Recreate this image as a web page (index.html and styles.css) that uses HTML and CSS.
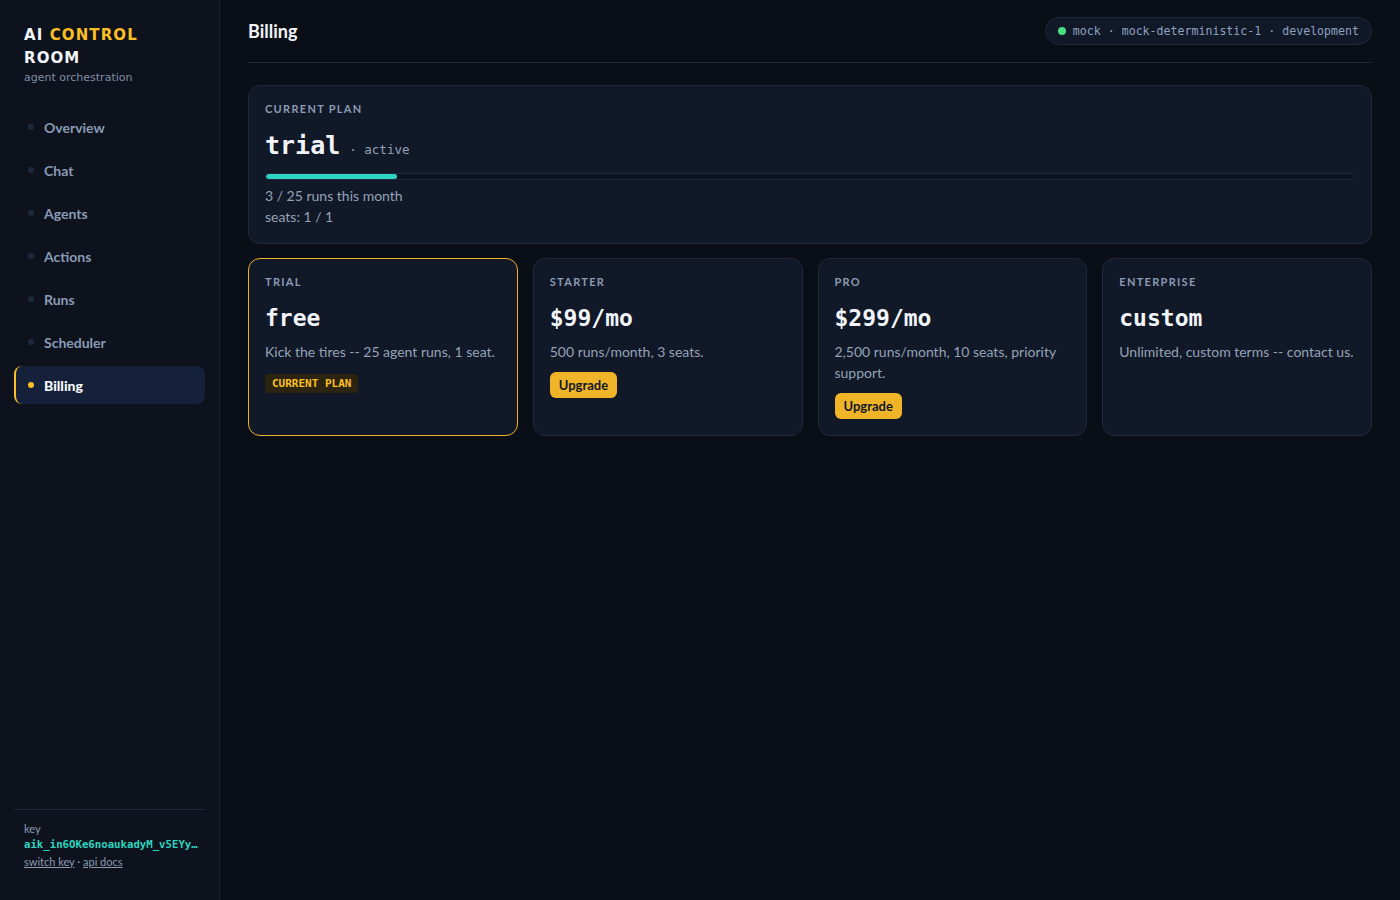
FILE: index.html
```html
<!DOCTYPE html>
<html lang="en">
<head>
  <meta charset="UTF-8" />
  <meta name="viewport" content="width=device-width, initial-scale=1.0"/>
  <title>Billing - AI Control Room</title>
  <link rel="stylesheet" href="styles.css">
</head>
<body>
  <aside class="sidebar">
    <div class="brand">
      <div class="brand-name">AI <span class="accent">CONTROL</span> ROOM</div>
      <div class="brand-sub">agent orchestration</div>
    </div>

    <nav class="nav">
      <a class="nav-item" href="#"><span class="dot"></span>Overview</a>
      <a class="nav-item" href="#"><span class="dot"></span>Chat</a>
      <a class="nav-item" href="#"><span class="dot"></span>Agents</a>
      <a class="nav-item" href="#"><span class="dot"></span>Actions</a>
      <a class="nav-item" href="#"><span class="dot"></span>Runs</a>
      <a class="nav-item" href="#"><span class="dot"></span>Scheduler</a>
      <a class="nav-item active" href="#"><span class="dot"></span>Billing</a>
    </nav>

    <div class="side-footer">
      <div class="key-label">key</div>
      <div class="key-value">aik_in6OKe6noaukadyM_v5EYy…</div>
      <div class="key-links"><a href="#">switch key</a> · <a href="#">api docs</a></div>
    </div>
  </aside>

  <main class="main">
    <header class="topbar">
      <h1>Billing</h1>
      <div class="status-pill">
        <span class="status-dot"></span>
        mock · mock-deterministic-1 · development
      </div>
    </header>

    <section class="card current">
      <div class="label">CURRENT PLAN</div>
      <div class="plan-line">
        <span class="plan-name">trial</span>
        <span class="plan-state">· active</span>
      </div>
      <div class="bar"><div class="bar-fill" style="width: 12%"></div></div>
      <div class="muted">3 / 25 runs this month</div>
      <div class="muted">seats: 1 / 1</div>
    </section>

    <section class="plans">
      <div class="card plan selected">
        <div class="label">TRIAL</div>
        <div class="price">free</div>
        <div class="desc">Kick the tires -- 25 agent runs, 1 seat.</div>
        <span class="badge">CURRENT PLAN</span>
      </div>
      <div class="card plan">
        <div class="label">STARTER</div>
        <div class="price">$99/mo</div>
        <div class="desc">500 runs/month, 3 seats.</div>
        <button class="upgrade">Upgrade</button>
      </div>
      <div class="card plan">
        <div class="label">PRO</div>
        <div class="price">$299/mo</div>
        <div class="desc">2,500 runs/month, 10 seats, priority support.</div>
        <button class="upgrade">Upgrade</button>
      </div>
      <div class="card plan">
        <div class="label">ENTERPRISE</div>
        <div class="price">custom</div>
        <div class="desc">Unlimited, custom terms -- contact us.</div>
      </div>
    </section>
  </main>
</body>
</html>
```

FILE: styles.css
```css
body {
  margin: 0;
  background: #0a0e17;
  color: #e2e8f0;
  font-family: 'Lato', sans-serif;
  display: flex;
  min-height: 100vh;
}

a {
  color: inherit;
  text-decoration: none;
}

.sidebar {
  width: 220px;
  flex-shrink: 0;
  background: #0d121d;
  border-right: 1px solid #1a2130;
  box-sizing: border-box;
  padding: 24px 14px 29px;
  display: flex;
  flex-direction: column;
  height: 100vh;
}

.brand {
  padding: 0 10px;
  margin-bottom: 24px;
}

.brand-name {
  font-family: 'DejaVu Sans', sans-serif;
  font-weight: bold;
  font-size: 15px;
  letter-spacing: 1.1px;
  line-height: 23px;
  color: #f1f5f9;
  width: 125px;
}

.accent {
  color: #fbbf24;
}

.brand-sub {
  font-family: 'DejaVu Sans', sans-serif;
  font-size: 11px;
  color: #7f8ea8;
  margin-top: 1px;
}

.nav {
  display: flex;
  flex-direction: column;
  gap: 5px;
}

.nav-item {
  display: flex;
  align-items: center;
  gap: 10px;
  height: 38px;
  padding: 0 12px;
  border-radius: 8px;
  border-left: 2px solid transparent;
  font-size: 14px;
  font-weight: bold;
  color: #8a9bb6;
}

.nav-item .dot {
  width: 6px;
  height: 6px;
  border-radius: 50%;
  background: #1e293b;
}

.nav-item.active {
  background: #15203a;
  border-left-color: #fbbf24;
  color: #f8fafc;
  font-weight: 900;
}

.nav-item.active .dot {
  background: #fbbf24;
}

.side-footer {
  margin-top: auto;
  border-top: 1px solid #1e293b;
  padding: 11px 10px 0;
  font-size: 11px;
}

.key-label {
  color: #8b9bb4;
  line-height: 16px;
}

.key-value {
  font-family: 'DejaVu Sans Mono', monospace;
  font-weight: bold;
  font-size: 10.7px;
  color: #2dd4bf;
  line-height: 16px;
  white-space: nowrap;
}

.key-links {
  color: #8b9bb4;
  line-height: 18px;
}

.key-links a {
  text-decoration: underline;
}

.main {
  flex: 1;
  padding: 0 28px;
}

.topbar {
  height: 62px;
  border-bottom: 1px solid #1e293b;
  display: flex;
  align-items: center;
  justify-content: space-between;
  margin-bottom: 22px;
}

.topbar h1 {
  margin: 0;
  font-size: 18px;
  font-weight: bold;
  color: #f1f5f9;
}

.status-pill {
  display: flex;
  align-items: center;
  gap: 7px;
  height: 28px;
  padding: 0 12px;
  box-sizing: border-box;
  border: 1px solid #1e293b;
  border-radius: 14px;
  background: #111827;
  font-family: 'DejaVu Sans Mono', monospace;
  font-size: 11.6px;
  color: #8ea2c0;
  white-space: nowrap;
}

.status-dot {
  width: 8px;
  height: 8px;
  border-radius: 50%;
  background: #4ade80;
}

.card {
  background: #111827;
  border: 1px solid #1e293b;
  border-radius: 12px;
  padding: 15px 16px 16px;
  box-sizing: border-box;
}

.label {
  font-size: 11px;
  font-weight: bold;
  letter-spacing: 1.3px;
  color: #8b9bb4;
  line-height: 15px;
}

.plan-line {
  display: flex;
  align-items: baseline;
  gap: 9px;
  margin-top: 12px;
  height: 36px;
  line-height: 36px;
}

.plan-name {
  font-family: 'DejaVu Sans Mono', monospace;
  font-weight: bold;
  font-size: 25px;
  color: #f1f5f9;
}

.plan-state {
  font-family: 'DejaVu Sans Mono', monospace;
  font-size: 12.5px;
  color: #94a3b8;
}

.bar {
  height: 7px;
  box-sizing: border-box;
  border: 1px solid #1e293b;
  border-radius: 4px;
  background: #0d1320;
  margin: 9px 0 5px;
  overflow: hidden;
}

.bar-fill {
  height: 100%;
  background: #2dd4bf;
  border-radius: 4px;
}

.muted {
  font-size: 14px;
  color: #94a3b8;
  line-height: 21px;
}

.plans {
  display: grid;
  grid-template-columns: repeat(4, 1fr);
  gap: 15px;
  margin-top: 14px;
}

.plan.selected {
  border-color: #f0b429;
}

.price {
  font-family: 'DejaVu Sans Mono', monospace;
  font-weight: bold;
  font-size: 23px;
  color: #f1f5f9;
  margin-top: 14px;
  line-height: 30px;
}

.desc {
  font-size: 14px;
  color: #94a3b8;
  line-height: 21px;
  margin-top: 8px;
}

.badge {
  display: inline-block;
  margin-top: 12px;
  padding: 0 7px;
  border-radius: 4px;
  background: #2a2410;
  color: #fbbf24;
  font-family: 'DejaVu Sans Mono', monospace;
  font-weight: bold;
  font-size: 11px;
  line-height: 19px;
}

.upgrade {
  display: block;
  margin-top: 10px;
  height: 26px;
  padding: 0 9px;
  border: none;
  border-radius: 6px;
  background: #f0b429;
  color: #111827;
  font-family: 'Lato', sans-serif;
  font-weight: bold;
  font-size: 13px;
  cursor: pointer;
}

.upgrade:hover {
  background: #eab308;
}
```
